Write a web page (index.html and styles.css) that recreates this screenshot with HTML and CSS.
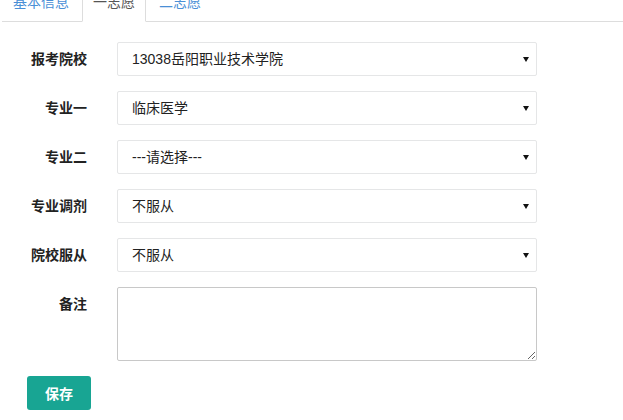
FILE: index.html
```html
<!DOCTYPE html>
<html lang="zh">
<head>
    <meta charset="UTF-8">
    <meta name="viewport" content="width=device-width, initial-scale=1.0">
    <title>志愿填报</title>
    <link rel="stylesheet" href="styles.css">
</head>
<body>
    <div class="page">
        <ul class="nav-tabs">
            <li><a href="#">基本信息</a></li>
            <li class="active"><a href="#">一志愿</a></li>
            <li><a href="#">二志愿</a></li>
        </ul>

        <form class="form-horizontal">
            <div class="form-group">
                <label class="control-label">报考院校</label>
                <div class="select-wrap">
                    <select class="form-control">
                        <option>13038岳阳职业技术学院</option>
                    </select>
                </div>
            </div>
            <div class="form-group">
                <label class="control-label">专业一</label>
                <div class="select-wrap">
                    <select class="form-control">
                        <option>临床医学</option>
                    </select>
                </div>
            </div>
            <div class="form-group">
                <label class="control-label">专业二</label>
                <div class="select-wrap">
                    <select class="form-control">
                        <option>---请选择---</option>
                    </select>
                </div>
            </div>
            <div class="form-group">
                <label class="control-label">专业调剂</label>
                <div class="select-wrap">
                    <select class="form-control">
                        <option>不服从</option>
                        <option>服从</option>
                    </select>
                </div>
            </div>
            <div class="form-group">
                <label class="control-label">院校服从</label>
                <div class="select-wrap">
                    <select class="form-control">
                        <option>不服从</option>
                        <option>服从</option>
                    </select>
                </div>
            </div>
            <div class="form-group">
                <label class="control-label">备注</label>
                <textarea class="remark" rows="3"></textarea>
            </div>
            <button type="button" class="btn-primary">保存</button>
        </form>
    </div>
</body>
</html>
```

FILE: styles.css
```css
body {
    margin: 0;
    font-family: "Liberation Sans", "Noto Sans CJK SC", sans-serif;
    font-size: 14px;
    line-height: 20px;
    color: #333;
    background-color: white;
}
.page {
    margin-top: -20px;
    padding-left: 2px;
}
.nav-tabs {
    display: flex;
    list-style: none;
    margin: 0;
    padding: 0;
    border-bottom: 1px solid #ddd;
}
.nav-tabs li {
    margin-right: 2px;
    margin-bottom: -1px;
}
.nav-tabs a {
    display: block;
    padding: 11px 10px 9px;
    border: 1px solid transparent;
    color: #4a8fd6;
    text-decoration: none;
}
.nav-tabs .active a {
    color: #555;
    background-color: white;
    border-color: #ddd;
    border-bottom-color: white;
}
.form-horizontal {
    padding-top: 20px;
}
.form-group {
    display: flex;
    align-items: flex-start;
    margin-bottom: 15px;
}
.control-label {
    width: 85px;
    padding-top: 7px;
    margin-right: 30px;
    text-align: right;
    font-weight: bold;
    color: #222;
}
.select-wrap {
    position: relative;
    width: 420px;
}
.select-wrap::after {
    content: "";
    position: absolute;
    right: 8px;
    top: 15px;
    border-left: 3px solid transparent;
    border-right: 3px solid transparent;
    border-top: 5px solid #111;
    pointer-events: none;
}
.form-control {
    appearance: none;
    -webkit-appearance: none;
    display: block;
    width: 100%;
    height: 34px;
    padding: 6px 14px;
    border: 1px solid #e5e6e7;
    border-radius: 2px;
    background-color: white;
    font-family: inherit;
    font-size: 14px;
    color: #222;
}
.remark {
    width: 420px;
    height: 74px;
    box-sizing: border-box;
    margin: 0;
    padding: 6px 12px;
    border: 1px solid #c8c8c8;
    border-radius: 2px;
    font-family: inherit;
    font-size: 14px;
    resize: both;
}
.btn-primary {
    display: block;
    margin-left: 25px;
    width: 64px;
    height: 34px;
    padding: 6px 12px;
    background-color: #18a593;
    color: white;
    border: none;
    border-radius: 3px;
    font-family: inherit;
    font-size: 14px;
    font-weight: bold;
    cursor: pointer;
}
```
